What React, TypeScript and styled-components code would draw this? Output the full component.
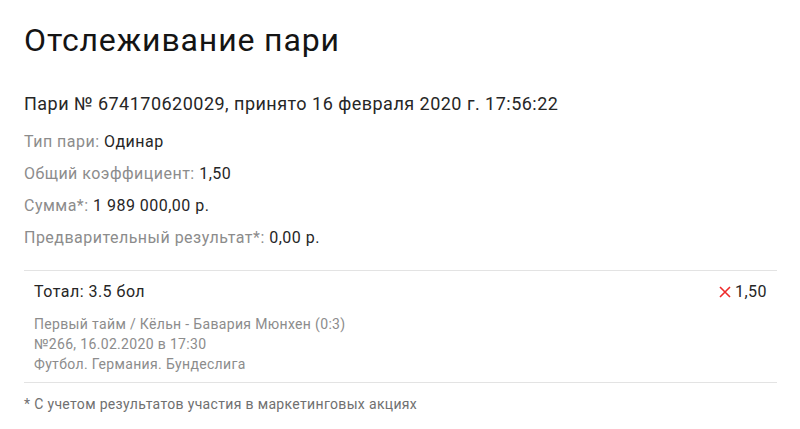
import styled, { createGlobalStyle } from "styled-components";

const Global = createGlobalStyle`
  html, body {
    margin: 0;
    padding: 0;
    background: #fff;
  }
  body {
    font-family: Roboto, "Liberation Sans Narrow", "Liberation Sans", sans-serif;
    font-stretch: 88%;
    font-weight: 400;
    letter-spacing: 0.03em;
    color: #262626;
  }
`;

const Page = styled.div`
  padding: 20px 23px 0 24px;
`;

const Title = styled.h1`
  margin: 0;
  font-size: 32px;
  font-weight: 400;
  line-height: 40px;
  letter-spacing: 0.027em;
  color: #141414;
`;

const BetInfo = styled.div`
  margin-top: 32px;
  font-size: 18px;
  line-height: 24px;
`;

const Details = styled.div`
  margin-top: 10px;
`;

const Row = styled.div`
  font-size: 16px;
  line-height: 32px;
`;

const Label = styled.span`
  color: #8c8c8c;
`;

const Event = styled.div`
  margin-top: 16px;
  border-top: 1px solid #e3e3e3;
  border-bottom: 1px solid #e3e3e3;
  padding: 9px 10px 8px 10px;
`;

const EventHead = styled.div`
  display: flex;
  justify-content: space-between;
  align-items: center;
  font-size: 16px;
  line-height: 24px;
`;

const Odds = styled.span`
  display: flex;
  align-items: center;
  gap: 4px;
`;

const EventMeta = styled.div`
  margin-top: 10px;
  font-size: 14px;
  line-height: 20px;
  letter-spacing: 0.024em;
  color: #8c8c8c;
`;

const Note = styled.div`
  margin-top: 11px;
  font-size: 14px;
  line-height: 20px;
  letter-spacing: 0.024em;
  color: #707070;
`;

const Cross = () => (
  <svg width="12" height="12" viewBox="0 0 12 12">
    <path d="M1 1 L11 11 M11 1 L1 11" stroke="#ee2a2a" strokeWidth="1.6" />
  </svg>
);

export default function App() {
  return (
    <>
      <Global />
      <Page>
        <Title>Отслеживание пари</Title>
        <BetInfo>Пари № 674170620029, принято 16 февраля 2020 г. 17:56:22</BetInfo>
        <Details>
          <Row>
            <Label>Тип пари:</Label> Одинар
          </Row>
          <Row>
            <Label>Общий коэффициент:</Label> 1,50
          </Row>
          <Row>
            <Label>Сумма*:</Label> 1 989 000,00 р.
          </Row>
          <Row>
            <Label>Предварительный результат*:</Label> 0,00 р.
          </Row>
        </Details>
        <Event>
          <EventHead>
            <span>Тотал: 3.5 бол</span>
            <Odds>
              <Cross />
              1,50
            </Odds>
          </EventHead>
          <EventMeta>
            <div>Первый тайм / Кёльн - Бавария Мюнхен (0:3)</div>
            <div>№266, 16.02.2020 в 17:30</div>
            <div>Футбол. Германия. Бундеслига</div>
          </EventMeta>
        </Event>
        <Note>* С учетом результатов участия в маркетинговых акциях</Note>
      </Page>
    </>
  );
}
